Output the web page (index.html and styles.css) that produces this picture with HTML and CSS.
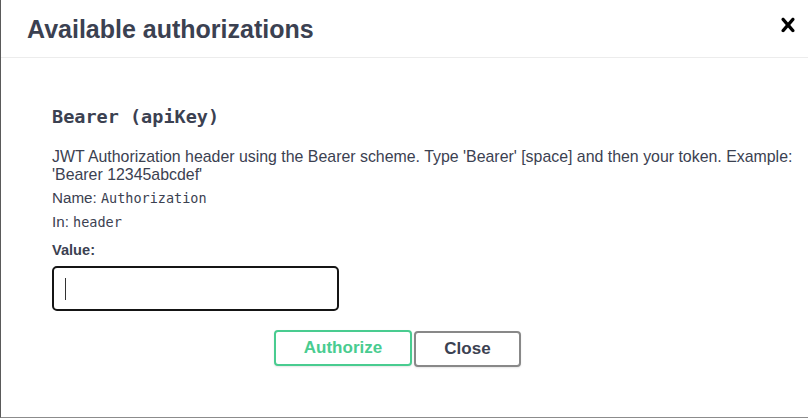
FILE: index.html
```html
<!DOCTYPE html>
<html>
<head>
<meta charset="utf-8">
<link rel="stylesheet" href="styles.css">
</head>
<body>
<div class="modal">
  <div class="modal-header">
    <h3 class="title">Available authorizations</h3>
    <button class="close-btn" aria-label="close">
      <svg width="28" height="28" viewBox="0 0 20 20"><path d="M14.348 14.849c-.469.469-1.229.469-1.697 0L10 11.819l-2.651 3.029c-.469.469-1.229.469-1.697 0-.469-.469-.469-1.229 0-1.697l2.758-3.150-2.759-3.152c-.469-.469-.469-1.228 0-1.697.469-.469 1.228-.469 1.697 0L10 8.183l2.651-3.031c.469-.469 1.228-.469 1.697 0 .469.469.469 1.229 0 1.697l-2.758 3.152 2.758 3.150c.469.469.469 1.229 0 1.698z" fill="#000"/></svg>
    </button>
  </div>
  <div class="modal-body">
    <div class="auth">
      <h4 class="auth-title">Bearer (apiKey)</h4>
      <p class="desc">JWT Authorization header using the Bearer scheme. Type 'Bearer' [space] and then your token. Example: 'Bearer 12345abcdef'</p>
      <p class="meta meta-name">Name: <code>Authorization</code></p>
      <p class="meta meta-in">In: <code>header</code></p>
      <label class="value-label">Value:</label>
      <div class="input"><span class="caret"></span></div>
    </div>
    <div class="btn-row">
      <button class="btn btn-auth">Authorize</button>
      <button class="btn btn-close">Close</button>
    </div>
  </div>
</div>
</body>
</html>
```
FILE: styles.css
```css
* { box-sizing: border-box; }
html, body { margin: 0; padding: 0; background: #fff; }
body { font-family: "Liberation Sans", Arial, sans-serif; color: #3b4151; }

.modal {
  width: 808px;
  height: 418px;
  border-left: 1px solid #5a5a5a;
  border-bottom: 1px solid #8c8c8c;
  display: flex;
  flex-direction: column;
}

.modal-header {
  height: 58px;
  border-bottom: 1px solid #ececec;
  display: flex;
  align-items: center;
  justify-content: space-between;
  padding-left: 26px;
  padding-right: 6px;
}
.title {
  margin: 0 0 -1px;
  font-size: 25px;
  font-weight: 700;
  color: #3b4151;
}
.close-btn {
  border: 0;
  background: none;
  padding: 0;
  width: 28px;
  height: 28px;
  margin-bottom: 8px;
  display: flex;
}

.modal-body { padding-top: 47px; }
.auth { padding-left: 51px; padding-right: 8px; }

.auth-title {
  margin: 0;
  font-family: "DejaVu Sans Mono", monospace;
  font-size: 18.5px;
  line-height: 24px;
  font-weight: 700;
  color: #3b4151;
}
.desc {
  margin: 19px 0 0;
  font-size: 15.9px;
  line-height: 18px;
}
.meta {
  margin: 0;
  font-size: 15.2px;
  line-height: 18px;
}
.meta code {
  font-family: "DejaVu Sans Mono", monospace;
  font-size: 13.5px;
}
.meta-name { margin-top: 5px; }
.meta-in { margin-top: 6px; }
.value-label {
  display: block;
  margin-top: 10px;
  font-size: 14.6px;
  line-height: 18px;
  font-weight: 700;
}
.input {
  margin-top: 7px;
  width: 287px;
  height: 45px;
  border: 2px solid #151515;
  border-radius: 5px;
  display: flex;
  align-items: center;
  padding-left: 11px;
}
.caret {
  width: 1px;
  height: 22px;
  background: #333;
}

.btn-row {
  display: flex;
  justify-content: center;
  gap: 2px;
  margin-top: 19px;
  padding-right: 14px;
}
.btn {
  height: 36px;
  padding: 0;
  font-family: "Liberation Sans", Arial, sans-serif;
  font-size: 17px;
  font-weight: 700;
  background: #fff;
  border-radius: 4px;
  box-shadow: 0 1px 2px rgba(0,0,0,.1);
}
.btn-auth {
  width: 138px;
  border: 2px solid #49cc90;
  color: #49cc90;
}
.btn-close {
  width: 107px;
  margin-top: 1px;
  border: 2px solid #888;
  color: #3b4151;
}
```
